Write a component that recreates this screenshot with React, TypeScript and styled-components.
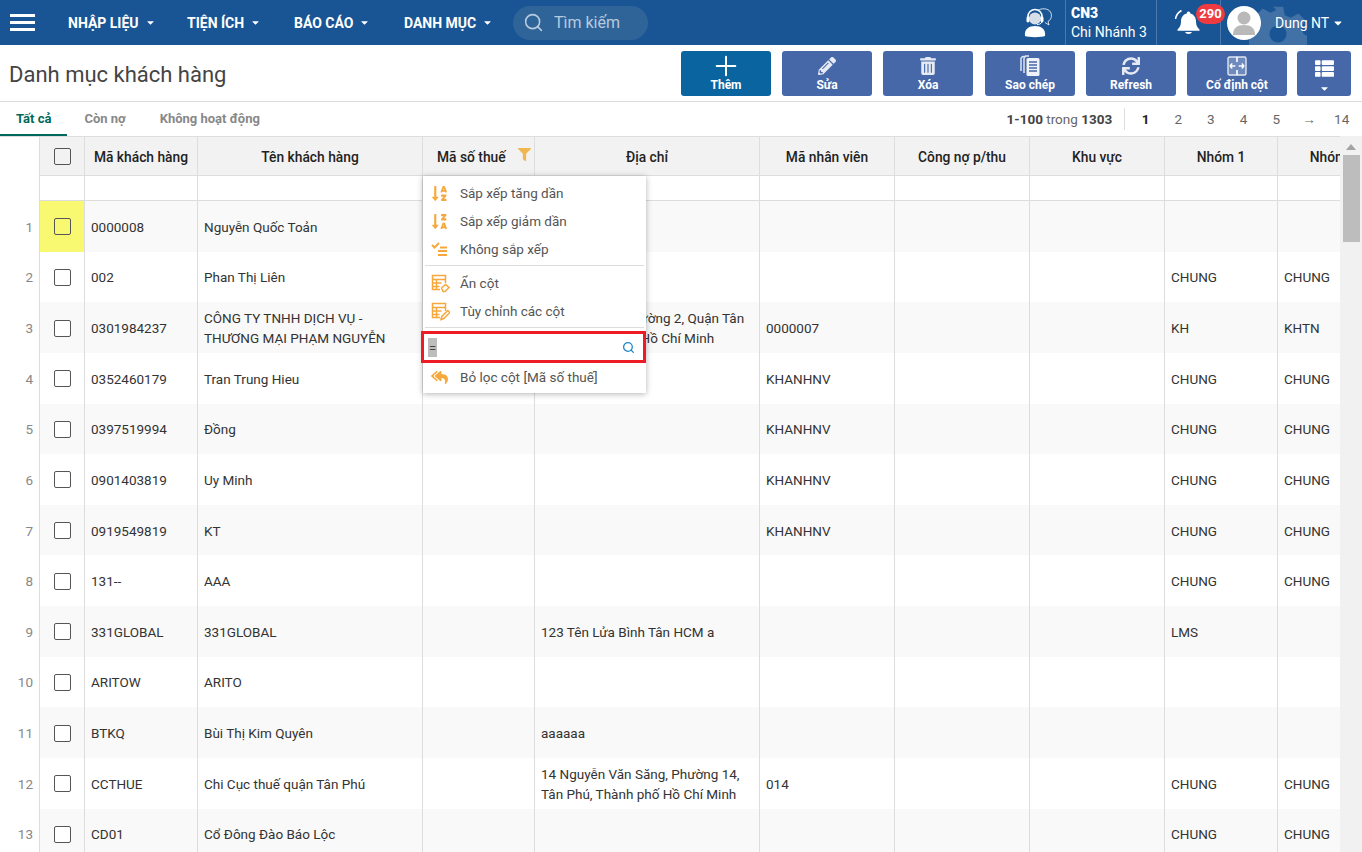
import React from "react";
import styled, { createGlobalStyle } from "styled-components";
import { FaCaretDown, FaFilter, FaPencilAlt, FaReplyAll, FaSortAlphaDown, FaSortAlphaDownAlt, FaSync, FaThList, FaTrashAlt } from "react-icons/fa";
import { Plus, Search } from "lucide-react";

const GlobalStyle = createGlobalStyle`
  html, body { margin: 0; padding: 0; height: 100%; overflow: hidden; background: #fff; }
  * { box-sizing: border-box; }
  body { font-family: Roboto, "Noto Sans", sans-serif; font-size: 13.5px; color: #333; }
`;

const Page = styled.div`
  height: 852px;
  display: flex;
  flex-direction: column;
  overflow: hidden;
`;

/* ---------- top bar ---------- */
const TopBar = styled.header`
  height: 45px;
  flex: none;
  background: #195594;
  display: flex;
  align-items: center;
  color: #fff;
  font-size: 14px;
  position: relative;
  overflow: hidden;
`;
const Burger = styled.div`
  width: 25px;
  height: 17px;
  margin: 0 33px 0 10px;
  border-top: 3px solid #fff;
  border-bottom: 3px solid #fff;
  position: relative;
  &::after {
    content: "";
    position: absolute;
    left: 0;
    right: 0;
    top: 4px;
    height: 3px;
    background: #fff;
  }
`;
const NavItem = styled.div<{ $w: number }>`
  width: ${(p) => p.$w}px;
  display: flex;
  align-items: center;
  font-weight: 700;
  font-size: 14px;
  gap: 6px;
  white-space: nowrap;
`;
const SearchPill = styled.div`
  width: 135px;
  height: 34px;
  border-radius: 17px;
  background: #2f6499;
  display: flex;
  align-items: center;
  gap: 10px;
  padding-left: 10px;
  color: #b9cade;
  font-size: 16px;
  line-height: 36px;
`;
const TopRight = styled.div`
  margin-left: auto;
  height: 100%;
  display: flex;
  align-items: stretch;
  position: relative;
`;
const HeadsetCell = styled.div`
  display: flex;
  align-items: center;
  padding-right: 11px;
`;
const BranchCell = styled.div`
  width: 91px;
  border-left: 1px solid #4a78aa;
  padding-left: 5px;
  display: flex;
  flex-direction: column;
  justify-content: center;
  gap: 2px;
  line-height: 17px;
`;
const BranchCode = styled.div`
  font-weight: 900;
  font-size: 14px;
`;
const BellCell = styled.div`
  width: 64px;
  border-left: 1px solid #4a78aa;
  display: flex;
  align-items: center;
  padding-left: 18px;
  position: relative;
`;
const Badge = styled.span`
  position: absolute;
  left: 39px;
  top: 4px;
  width: 29px;
  height: 20px;
  border-radius: 10px;
  background: #ee3b41;
  font-weight: 700;
  font-size: 13px;
  text-align: center;
  line-height: 20px;
  z-index: 2;
`;
const UserCell = styled.div`
  width: 142px;
  border-left: 1px solid #4a78aa;
  padding-left: 6px;
  display: flex;
  align-items: center;
  position: relative;
`;
const Gear = styled.svg`
  position: absolute;
  left: 28px;
  top: 5px;
`;
const Avatar = styled.div`
  width: 34px;
  height: 34px;
  border-radius: 50%;
  background: #fff;
  display: flex;
  align-items: center;
  justify-content: center;
  overflow: hidden;
  position: relative;
`;
const UserName = styled.span`
  margin-left: 14px;
  position: relative;
  display: flex;
  align-items: center;
  gap: 3px;
`;

/* ---------- toolbar ---------- */
const ToolBar = styled.div`
  height: 57px;
  flex: none;
  border-bottom: 1px solid #ddd;
  display: flex;
  align-items: center;
  padding: 1px 11px 0 9px;
  gap: 11px;
`;
const Title = styled.h1`
  margin: 2px auto 0 0;
  font-size: 22px;
  font-weight: 400;
  color: #444;
`;
const ActionButton = styled.button<{ $w?: number; $primary?: boolean; $shift?: number }>`
  width: ${(p) => p.$w ?? 90}px;
  height: 45px;
  border: 0;
  border-radius: 3px;
  margin-left: ${(p) => p.$shift ?? 0}px;
  padding: 3px 0 4px;
  background: ${(p) => (p.$primary ? "#0a64a0" : "#4668a8")};
  color: #fff;
  font-family: inherit;
  font-size: 12px;
  font-weight: 700;
  display: flex;
  flex-direction: column;
  align-items: center;
  justify-content: space-between;
`;
const IconSlot = styled.span`
  height: 24px;
  display: flex;
  align-items: center;
  justify-content: center;
`;
const ListGlyph = styled(FaThList)`
  margin-top: 5px;
`;
const MoreCaret = styled(FaCaretDown)`
  margin-bottom: -2px;
`;

/* ---------- tabs ---------- */
const TabBar = styled.div`
  height: 34px;
  flex: none;
  display: flex;
  align-items: stretch;
`;
const Tab = styled.div<{ $active?: boolean }>`
  padding: 0 ${(p) => (p.$active ? 16 : 17)}px;
  font-size: 13px;
  font-weight: 700;
  line-height: 34px;
  color: ${(p) => (p.$active ? "#00695c" : "#888")};
  border-bottom: 2px solid ${(p) => (p.$active ? "#00695c" : "transparent")};
`;
const Pager = styled.div`
  margin-left: auto;
  padding-right: 4px;
  display: flex;
  align-items: center;
  color: #666;
`;
const PagerInfo = styled.div`
  padding-right: 12px;
  margin-right: 4px;
  height: 22px;
  line-height: 22px;
  border-right: 1px solid #ddd;
  b { color: #444; font-weight: 700; }
`;
const PageLink = styled.span<{ $active?: boolean }>`
  width: 32.7px;
  text-align: center;
  font-weight: ${(p) => (p.$active ? 700 : 400)};
  color: ${(p) => (p.$active ? "#222" : "#666")};
`;

/* ---------- grid ---------- */
const GridArea = styled.div`
  flex: 1;
  min-height: 0;
  position: relative;
  display: flex;
`;
const GridView = styled.div`
  flex: 1;
  min-width: 0;
  overflow: hidden;
`;
const Row = styled.div<{ $h: number; $striped?: boolean }>`
  height: ${(p) => p.$h}px;
  width: 1400px;
  display: flex;
  background: ${(p) => (p.$striped ? "#f9f9f9" : "#fff")};
`;
const IndexCell = styled.div`
  width: 40px;
  flex: none;
  background: #fff;
  border-right: 1px solid #ddd;
  padding: 1px 6px 0 0;
  display: flex;
  align-items: center;
  justify-content: flex-end;
  color: #888;
`;
const Cell = styled.div<{ $w: number }>`
  width: ${(p) => p.$w}px;
  flex: none;
  border-right: 1px solid #ddd;
  padding: 1px 6px 0;
  display: flex;
  align-items: center;
  line-height: 20px;
  color: #333;
`;
const CheckCell = styled(Cell)<{ $mark?: boolean }>`
  justify-content: center;
  padding: 1px 0 0;
  background: ${(p) => (p.$mark ? "#f8f871" : "transparent")};
`;
const HeadRow = styled(Row)`
  background: #fff;
  border-top: 1px solid #ddd;
`;
const HeadCell = styled(Cell)<{ $filtered?: boolean }>`
  background: #f2f2f2;
  border-bottom: 1px solid #ddd;
  justify-content: ${(p) => (p.$filtered ? "flex-start" : "center")};
  padding-left: ${(p) => (p.$filtered ? 14 : 6)}px;
  padding-right: ${(p) => (p.$filtered ? 0 : 6)}px;
  font-size: 13.8px;
  font-weight: 500;
  color: #222;
  white-space: nowrap;
  gap: 12px;
`;
const HeadCheckCell = styled(HeadCell)`
  padding: 0;
`;
const Funnel = styled(FaFilter)`
  flex: none;
  transform: translateY(-2px);
`;
const FilterCell = styled(Cell)`
  border-bottom: 1px solid #ddd;
`;
const Check = styled.span<{ $clear?: boolean }>`
  width: 17px;
  height: 17px;
  border: 1px solid #555;
  border-radius: 2px;
  background: ${(p) => (p.$clear ? "transparent" : "#fff")};
  display: block;
`;

/* ---------- scrollbar ---------- */
const ScrollTrack = styled.div`
  width: 22px;
  flex: none;
  background: #f1f1f1;
  padding: 0 3px;
`;
const ScrollArrow = styled.div`
  width: 0;
  height: 0;
  margin: 8px auto 5px;
  border-left: 5px solid transparent;
  border-right: 5px solid transparent;
  border-bottom: 6px solid #a3a3a3;
`;
const ScrollThumb = styled.div`
  width: 17px;
  height: 87px;
  background: #bdbdbd;
`;

/* ---------- column menu ---------- */
const Menu = styled.div`
  position: absolute;
  left: 423px;
  top: 40px;
  width: 223px;
  height: 217px;
  background: #fff;
  box-shadow: 0 1px 6px rgba(0, 0, 0, 0.3);
  padding-top: 3px;
  z-index: 5;
`;
const MenuItem = styled.div`
  height: 28px;
  display: flex;
  align-items: center;
  padding-left: 8px;
  color: #555;
  white-space: nowrap;
`;
const MenuIcon = styled.span`
  width: 29px;
  flex: none;
  display: flex;
  align-items: center;
`;
const MenuDivider = styled.div<{ $top: number; $bottom: number }>`
  height: 1px;
  background: #ddd;
  margin: ${(p) => p.$top}px 2px ${(p) => p.$bottom}px;
`;
const MenuSearch = styled.div`
  height: 32px;
  margin-left: -2px;
  border: 3px solid #ed1c24;
  background: #fff;
  display: flex;
  align-items: center;
  justify-content: space-between;
  padding: 0 8px 0 4px;
  color: #444;
`;
const Selected = styled.span`
  width: 9px;
  height: 19px;
  line-height: 21px;
  background: #bdbdbd;
  text-align: center;
  font-size: 13px;
`;

const columns = [
  { key: "code", label: "Mã khách hàng", w: 113 },
  { key: "name", label: "Tên khách hàng", w: 225 },
  { key: "tax", label: "Mã số thuế", w: 112 },
  { key: "addr", label: "Địa chỉ", w: 225 },
  { key: "emp", label: "Mã nhân viên", w: 135 },
  { key: "debt", label: "Công nợ p/thu", w: 135 },
  { key: "area", label: "Khu vực", w: 135 },
  { key: "g1", label: "Nhóm 1", w: 113 },
  { key: "g2", label: "Nhóm 2", w: 113 },
] as const;

type Customer = Partial<Record<(typeof columns)[number]["key"], string>>;

const customers: Customer[] = [
  { code: "0000008", name: "Nguyễn Quốc Toản" },
  { code: "002", name: "Phan Thị Liên", addr: "Thị trấn Bình Tân", g1: "CHUNG", g2: "CHUNG" },
  {
    code: "0301984237",
    name: "CÔNG TY TNHH DỊCH VỤ - THƯƠNG MẠI PHẠM NGUYỄN",
    addr: "21 Lê Văn Sỹ, Phường 2, Quận Tân Bình, Thành phố Hồ Chí Minh",
    emp: "0000007",
    g1: "KH",
    g2: "KHTN",
  },
  { code: "0352460179", name: "Tran Trung Hieu", emp: "KHANHNV", g1: "CHUNG", g2: "CHUNG" },
  { code: "0397519994", name: "Đồng", emp: "KHANHNV", g1: "CHUNG", g2: "CHUNG" },
  { code: "0901403819", name: "Uy Minh", emp: "KHANHNV", g1: "CHUNG", g2: "CHUNG" },
  { code: "0919549819", name: "KT", emp: "KHANHNV", g1: "CHUNG", g2: "CHUNG" },
  { code: "131--", name: "AAA", g1: "CHUNG", g2: "CHUNG" },
  { code: "331GLOBAL", name: "331GLOBAL", addr: "123 Tên Lửa Bình Tân HCM a", g1: "LMS" },
  { code: "ARITOW", name: "ARITO" },
  { code: "BTKQ", name: "Bùi Thị Kim Quyên", addr: "aaaaaa" },
  {
    code: "CCTHUE",
    name: "Chi Cục thuế quận Tân Phú",
    addr: "14 Nguyễn Văn Săng, Phường 14, Tân Phú, Thành phố Hồ Chí Minh",
    emp: "014",
    g1: "CHUNG",
    g2: "CHUNG",
  },
  { code: "CD01", name: "Cổ Đông Đào Báo Lộc", g1: "CHUNG", g2: "CHUNG" },
];

const ORANGE = "#f6a83c";

const HeadsetIcon = () => (
  <svg width="31" height="31" viewBox="0 0 31 31" fill="none">
    <path d="M15 3.500c3-2.500 10-2.500 12.500 1.500 2 3.500.5 8-2.500 9.500l1 3.500-4-2.500" stroke="#fff" strokeWidth="1" opacity=".8" />
    <circle cx="12" cy="11.500" r="6" fill="#d6dfe9" />
    <path d="M5 12V9.500a7 7 0 0 1 14 0V12" stroke="#fff" strokeWidth="1.600" />
    <rect x="3.500" y="9.500" width="3" height="6" rx="1.400" fill="#fff" />
    <rect x="17.500" y="9.500" width="3" height="6" rx="1.400" fill="#fff" />
    <path d="M19 15c-1 2-3 2.500-5 2.500" stroke="#fff" strokeWidth="1" />
    <path d="M2 29c-1-7 4-10 10-10s11 3 10 10c-3 1.500-17 1.500-20 0z" fill="#fff" />
  </svg>
);

const BellIcon = () => (
  <svg width="26" height="27" viewBox="0 0 26 27" fill="#fff">
    <path d="M13.500 2.500a1.800 1.800 0 0 1 1.800 1.900c3.800 1 5.700 4 5.700 8 0 4 1.400 6 3.500 8v1.300H2.500V20.400c2.100-2 3.500-4 3.500-8 0-4 1.900-7 5.700-8A1.800 1.800 0 0 1 13.500 2.500z" />
    <path d="M10 23h7c-1 2.600-6 2.600-7 0z" />
    <path d="M6.500 1.500C3 3.500 1 6.500.5 10" stroke="#fff" strokeWidth="1.600" fill="none" />
  </svg>
);

const GearIcon = () => (
  <Gear width="58" height="58" viewBox="0 0 68 68" fill="#4271a6">
    <path
      fillRule="evenodd"
      d="M28 2h12l2 10 7 3 9-5 8 8-5 9 3 7 4 2v12l-10 2-3 7 5 9-8 8-9-5-7 3-2 10H28l-2-10-7-3-9 5-8-8 5-9-3-7-4-2V30l10-2 3-7-5-9 8-8 9 5 7-3zM34 24a10 10 0 1 0 0 20 10 10 0 0 0 0-20z"
    />
  </Gear>
);

const PersonIcon = () => (
  <svg width="24" height="26" viewBox="0 0 24 26" fill="#b9b9b9">
    <circle cx="12" cy="8" r="6.500" />
    <path d="M1 25c0-7 4-10 11-10s11 3 11 10z" />
  </svg>
);

const CopyIcon = () => (
  <svg width="20" height="22" viewBox="0 0 20 22" fill="none">
    <path d="M6 1.500H3.500A2.500 2.500 0 0 0 1 4v12" stroke="#dfe5f0" strokeWidth="1.500" />
    <path d="M9 1H6.500A2.500 2.500 0 0 0 4 3.500V18" stroke="#dfe5f0" strokeWidth="1.500" />
    <rect x="6.500" y="3" width="13" height="18" rx="1.500" fill="#eef1f7" />
    <path d="M9 7h8M9 10h8M9 13h8M9 16h8" stroke="#4668a8" strokeWidth="1.300" />
  </svg>
);

const FreezeIcon = () => (
  <svg width="20" height="20" viewBox="0 0 20 20" fill="none">
    <rect x="1" y="1" width="18" height="18" rx="1.500" stroke="#dfe5f0" strokeWidth="1.400" fill="#6f8bbd" />
    <path d="M10 1v5M10 14v5" stroke="#fff" strokeWidth="1.600" />
    <path d="M2.800 10h5.500M2.800 10l2.500-2.500M2.800 10l2.500 2.500M11.700 10h5.500M17.200 10l-2.500-2.500M17.200 10l-2.500 2.500" stroke="#fff" strokeWidth="1.300" />
  </svg>
);

const ClearSortIcon = () => (
  <svg width="17" height="14" viewBox="0 0 17 14" fill="none" stroke={ORANGE} strokeWidth="2">
    <path d="M1 3l2.500 2.500L8 1" />
    <path d="M9 5.500h7M7 9h9M7 13h9" />
  </svg>
);

const TableIcon = ({ pencil }: { pencil?: boolean }) => (
  <svg width="19" height="19" viewBox="0 0 19 19" fill="none" stroke={ORANGE} strokeWidth="1.500">
    <path d="M9 15.500H1.500V1.500h13V9" />
    <path d="M1.500 5.500h13M1.500 9h9M1.500 12.500h7M5.500 5.500v10" />
    {pencil ? (
      <path d="M10 17.500l.8-3 6-6 2 2-6 6z" fill="#fff" />
    ) : (
      <path d="M10.500 14l4-3.500 3.500 3-4 4h-2z" fill="#fff" />
    )}
  </svg>
);

const menuIconProps = { size: 17, color: ORANGE };

export default function App() {
  return (
    <Page>
      <GlobalStyle />
      <TopBar>
        <Burger />
        <NavItem $w={119}>
          NHẬP LIỆU <FaCaretDown size={11} />
        </NavItem>
        <NavItem $w={107}>
          TIỆN ÍCH <FaCaretDown size={11} />
        </NavItem>
        <NavItem $w={110}>
          BÁO CÁO <FaCaretDown size={11} />
        </NavItem>
        <NavItem $w={109}>
          DANH MỤC <FaCaretDown size={11} />
        </NavItem>
        <SearchPill>
          <Search size={21} strokeWidth={1.800} />
          Tìm kiếm
        </SearchPill>
        <TopRight>
          <HeadsetCell>
            <HeadsetIcon />
          </HeadsetCell>
          <BranchCell>
            <BranchCode>CN3</BranchCode>
            <div>Chi Nhánh 3</div>
          </BranchCell>
          <BellCell>
            <BellIcon />
            <Badge>290</Badge>
          </BellCell>
          <UserCell>
            <GearIcon />
            <Avatar>
              <PersonIcon />
            </Avatar>
            <UserName>
              Dung NT <FaCaretDown size={12} />
            </UserName>
          </UserCell>
        </TopRight>
      </TopBar>

      <ToolBar>
        <Title>Danh mục khách hàng</Title>
        <ActionButton $primary>
          <IconSlot>
            <Plus size={32} strokeWidth={1.500} />
          </IconSlot>
          Thêm
        </ActionButton>
        <ActionButton>
          <IconSlot>
            <FaPencilAlt size={18} color="#e6eaf3" />
          </IconSlot>
          Sửa
        </ActionButton>
        <ActionButton>
          <IconSlot>
            <FaTrashAlt size={18} color="#e6eaf3" />
          </IconSlot>
          Xóa
        </ActionButton>
        <ActionButton $shift={1}>
          <IconSlot>
            <CopyIcon />
          </IconSlot>
          Sao chép
        </ActionButton>
        <ActionButton>
          <IconSlot>
            <FaSync size={18} color="#e6eaf3" />
          </IconSlot>
          Refresh
        </ActionButton>
        <ActionButton $w={100}>
          <IconSlot>
            <FreezeIcon />
          </IconSlot>
          Cố định cột
        </ActionButton>
        <ActionButton $w={54} $shift={-1}>
          <ListGlyph size={19} />
          <MoreCaret size={11} />
        </ActionButton>
      </ToolBar>

      <TabBar>
        <Tab $active>Tất cả</Tab>
        <Tab>Còn nợ</Tab>
        <Tab>Không hoạt động</Tab>
        <Pager>
          <PagerInfo>
            <b>1-100</b> trong <b>1303</b>
          </PagerInfo>
          <PageLink $active>1</PageLink>
          <PageLink>2</PageLink>
          <PageLink>3</PageLink>
          <PageLink>4</PageLink>
          <PageLink>5</PageLink>
          <PageLink>→</PageLink>
          <PageLink>14</PageLink>
        </Pager>
      </TabBar>

      <GridArea>
        <GridView>
          <HeadRow $h={40}>
            <IndexCell />
            <HeadCheckCell $w={45}>
              <Check $clear />
            </HeadCheckCell>
            {columns.map((c) => (
              <HeadCell key={c.key} $w={c.w} $filtered={c.key === "tax"}>
                {c.label}
                {c.key === "tax" && <Funnel size={13} color="#f0b64f" />}
              </HeadCell>
            ))}
          </HeadRow>
          <Row $h={25}>
            <IndexCell />
            <FilterCell $w={45} />
            {columns.map((c) => (
              <FilterCell key={c.key} $w={c.w} />
            ))}
          </Row>
          {customers.map((row, i) => (
            <Row key={row.code} $h={50.64} $striped={i % 2 === 0}>
              <IndexCell>{i + 1}</IndexCell>
              <CheckCell $w={45} $mark={i === 0}>
                <Check $clear={i === 0} />
              </CheckCell>
              {columns.map((c) => (
                <Cell key={c.key} $w={c.w}>
                  <span>{row[c.key]}</span>
                </Cell>
              ))}
            </Row>
          ))}
        </GridView>
        <ScrollTrack>
          <ScrollArrow />
          <ScrollThumb />
        </ScrollTrack>
        <Menu>
          <MenuItem>
            <MenuIcon>
              <FaSortAlphaDown {...menuIconProps} />
            </MenuIcon>
            Sắp xếp tăng dần
          </MenuItem>
          <MenuItem>
            <MenuIcon>
              <FaSortAlphaDownAlt {...menuIconProps} />
            </MenuIcon>
            Sắp xếp giảm dần
          </MenuItem>
          <MenuItem>
            <MenuIcon>
              <ClearSortIcon />
            </MenuIcon>
            Không sắp xếp
          </MenuItem>
          <MenuDivider $top={2} $bottom={3} />
          <MenuItem>
            <MenuIcon>
              <TableIcon />
            </MenuIcon>
            Ẩn cột
          </MenuItem>
          <MenuItem>
            <MenuIcon>
              <TableIcon pencil />
            </MenuIcon>
            Tùy chỉnh các cột
          </MenuItem>
          <MenuDivider $top={2} $bottom={3} />
          <MenuSearch>
            <Selected>=</Selected>
            <Search size={13} color="#1f87c9" strokeWidth={2.400} />
          </MenuSearch>
          <MenuItem>
            <MenuIcon>
              <FaReplyAll {...menuIconProps} />
            </MenuIcon>
            Bỏ lọc cột [Mã số thuế]
          </MenuItem>
        </Menu>
      </GridArea>
    </Page>
  );
}
